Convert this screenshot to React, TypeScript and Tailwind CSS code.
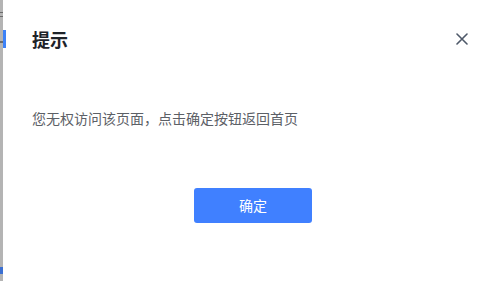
import React from 'react';

const App: React.FC = () => {
  return (
    <div
      className="flex h-[281px] w-[499px] overflow-hidden bg-white"
      style={{ fontFamily: '"Noto Sans CJK SC", "Liberation Sans", sans-serif' }}
    >
      {/* backdrop strip */}
      <div className="relative w-[3px] shrink-0 bg-[#b4b4b4]">
        <div className="absolute left-0 top-[12px] h-[1px] w-[3px] bg-[#6b6b6b]" />
        <div className="absolute left-0 top-[16px] h-[1px] w-[3px] bg-[#6b6b6b]" />
        <div className="absolute left-0 top-[41px] h-[2px] w-[3px] bg-[#6b6b6b]" />
        <div className="absolute left-0 top-[267px] h-[7px] w-[3px] bg-[#3b6fd1]" />
      </div>

      <div className="relative flex flex-1 flex-col">
        <div className="absolute left-0 top-[30px] h-[18px] w-[3px] bg-[#3d82f7]" />

        <div className="flex items-center justify-between pl-[29px] pr-[29px] pt-[27px]">
          <h1 className="text-[18px] font-bold leading-[24px] text-[#1f2329]">提示</h1>
          <button className="flex h-[16px] w-[16px] items-center justify-center text-[#4e5969]">
            <svg width="12" height="12" viewBox="0 0 12 12" fill="none">
              <path d="M1 1L11 11M11 1L1 11" stroke="currentColor" strokeWidth="1.6" strokeLinecap="round" />
            </svg>
          </button>
        </div>

        <p className="mt-[57px] pl-[29px] text-[14px] leading-[20px] text-[#5c6066]">
          您无权访问该页面，点击确定按钮返回首页
        </p>

        <div className="mt-[60px] flex justify-center pl-[4px]">
          <button className="h-[35px] w-[118px] rounded-[3px] bg-[#4080ff] text-[14px] text-white">
            确定
          </button>
        </div>
      </div>
    </div>
  );
};

export default App;
